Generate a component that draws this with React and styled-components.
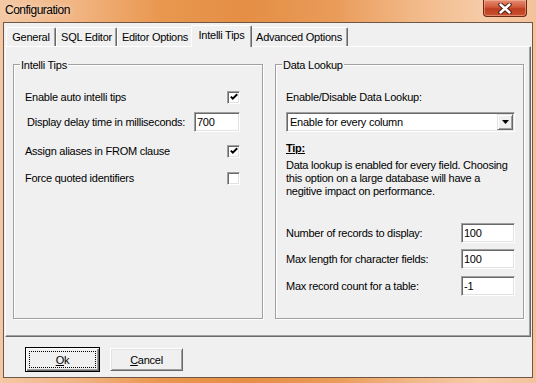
import React from "react";
import styled, { createGlobalStyle } from "styled-components";

const GlobalStyle = createGlobalStyle`
  *, *::before, *::after {
    box-sizing: border-box;
  }
  html, body {
    margin: 0;
    padding: 0;
    background: #f0f0f0;
  }
  body {
    font-family: "Liberation Sans", Arial, sans-serif;
    font-size: 11px;
    letter-spacing: -0.25px;
    color: #000;
  }
`;

const Window = styled.div`
  width: 536px;
  height: 383px;
  display: flex;
  flex-direction: column;
  overflow: hidden;
  background: linear-gradient(
    90deg,
    #f4c8a4 0%,
    #f1b583 14%,
    #e9974f 30%,
    #e58e45 46%,
    #e99b58 62%,
    #f2ba8a 78%,
    #f6cba7 90%,
    #f3c29b 100%
  );
`;

const TitleBar = styled.div`
  height: 22px;
  flex: none;
  display: flex;
  align-items: flex-start;
  justify-content: space-between;
  padding-left: 5px;
`;

const Title = styled.span`
  margin-top: 3px;
  font-size: 12px;
  letter-spacing: -0.5px;
  color: #000;
  text-shadow: 0 0 6px rgba(255, 240, 225, 0.9);
`;

const CloseButton = styled.div`
  width: 44px;
  height: 17px;
  margin-right: 9px;
  border: 1px solid #6e2814;
  border-top: none;
  border-radius: 0 0 4px 4px;
  background: linear-gradient(#e58d72 0%, #d2583a 45%, #bd3d20 55%, #c9522f 100%);
  box-shadow: inset 0 0 0 1px rgba(255, 200, 180, 0.45);
  display: flex;
  align-items: center;
  justify-content: center;
`;

const Client = styled.div`
  flex: 1;
  margin: 0 3px 5px 3px;
  border: 1px solid #6e5845;
  background: #f0f0f0;
  display: flex;
  flex-direction: column;
  padding: 1px 0 0 1px;
`;

const TabControl = styled.div`
  width: 526px;
  display: flex;
  flex-direction: column;
`;

const TabStrip = styled.div`
  height: 22px;
  display: flex;
  align-items: flex-end;
  padding-left: 1px;
`;

const Tab = styled.div`
  position: relative;
  width: ${p => p.$w}px;
  height: ${p => (p.$active ? 22 : 19)}px;
  margin: ${p => (p.$active ? "0 -2px -1px -2px" : "0")};
  z-index: ${p => (p.$active ? 1 : 0)};
  border-top: 1px solid #fff;
  border-left: 1px solid #fff;
  border-right: 1px solid #696969;
  border-radius: 2px 2px 0 0;
  box-shadow: inset -1px 0 0 #a0a0a0;
  background: #f0f0f0;
  text-align: center;
  line-height: 18px;
  white-space: nowrap;
`;

const Panel = styled.div`
  height: 291px;
  border-top: 1px solid #fff;
  border-left: 1px solid #fff;
  border-right: 1px solid #696969;
  border-bottom: 1px solid #696969;
  box-shadow: inset -1px -1px 0 #a0a0a0;
  padding: 17px 0 0 7px;
  display: grid;
  grid-template-columns: 250px 249px;
  column-gap: 12px;
  align-items: start;
`;

const GroupBox = styled.div`
  position: relative;
  height: 255px;
  border: 1px solid #a0a0a0;
  box-shadow: inset 1px 1px 0 #fff, 1px 1px 0 #fff;
  display: flex;
  flex-direction: column;
  padding: ${p => p.$pad};
`;

const Caption = styled.span`
  position: absolute;
  top: -6px;
  left: 6px;
  padding: 0 1px;
  line-height: 13px;
  background: #f0f0f0;
`;

const Row = styled.div`
  display: flex;
  align-items: center;
  justify-content: space-between;
  height: 20px;
  margin-top: ${p => p.$mt || 0}px;
  padding-left: ${p => p.$indent || 0}px;
  white-space: nowrap;
`;

const Label = styled.span`
  white-space: nowrap;
`;

const CheckBox = styled.div`
  width: 13px;
  height: 13px;
  border: 1px solid;
  border-color: #a0a0a0 #fff #fff #a0a0a0;
  box-shadow: inset 1px 1px 0 #696969, inset -1px -1px 0 #e3e3e3;
  background: #fff;
  display: flex;
  align-items: center;
  justify-content: center;
`;

const TextBox = styled.input`
  width: ${p => p.$w}px;
  height: 20px;
  margin: 0;
  padding: 0 0 0 2px;
  border: 1px solid;
  border-color: #a0a0a0 #fff #fff #a0a0a0;
  box-shadow: inset 1px 1px 0 #696969, inset -1px -1px 0 #e3e3e3;
  background: #fff;
  font-family: "Liberation Sans", Arial, sans-serif;
  font-size: 11px;
  letter-spacing: -0.25px;
  color: #000;
  outline: none;
`;

const ComboBox = styled.div`
  height: 20px;
  margin-top: 5px;
  border: 1px solid;
  border-color: #a0a0a0 #fff #fff #a0a0a0;
  box-shadow: inset 1px 1px 0 #696969, inset -1px -1px 0 #e3e3e3;
  background: #fff;
  display: flex;
  align-items: center;
  justify-content: space-between;
  padding: 0 1px 0 3px;
`;

const DropButton = styled.div`
  width: 16px;
  height: 16px;
  background: #f0f0f0;
  border: 1px solid;
  border-color: #e3e3e3 #696969 #696969 #e3e3e3;
  box-shadow: inset 1px 1px 0 #fff, inset -1px -1px 0 #a0a0a0;
  display: flex;
  align-items: center;
  justify-content: center;
`;

const TipTitle = styled.div`
  margin-top: 10px;
  line-height: 13px;
  font-weight: bold;
  text-decoration: underline;
`;

const TipText = styled.p`
  margin: 4px 0 0 0;
  line-height: 13px;
  white-space: nowrap;
`;

const ButtonRow = styled.div`
  display: flex;
  align-items: center;
  gap: 10px;
  padding: 10px 0 0 20px;
`;

const Button = styled.div`
  position: relative;
  width: ${p => (p.$default ? 75 : 73)}px;
  height: ${p => (p.$default ? 25 : 23)}px;
  background: #f0f0f0;
  border: 1px solid;
  border-color: ${p => (p.$default ? "#000" : "#fff #696969 #696969 #fff")};
  box-shadow: ${p =>
    p.$default
      ? "inset 1px 1px 0 #fff, inset -1px -1px 0 #696969, inset -2px -2px 0 #a0a0a0"
      : "inset 1px 1px 0 #e3e3e3, inset -1px -1px 0 #a0a0a0"};
  display: flex;
  align-items: center;
  justify-content: center;
  font-size: 11px;

  &::after {
    content: "";
    display: ${p => (p.$default ? "block" : "none")};
    position: absolute;
    inset: 3px;
    border: 1px dotted #000;
  }
`;

const Check = () => (
  <svg width="8" height="8" viewBox="0 0 8 8">
    <polyline points="0.8,3.6 2.8,5.6 7.2,1.2" fill="none" stroke="#000" strokeWidth="2" />
  </svg>
);

const CloseGlyph = () => (
  <svg width="14" height="11" viewBox="0 0 14 11">
    <path d="M2.5 1.5 L11.5 9.5 M11.5 1.5 L2.5 9.5" stroke="#4a1f14" strokeWidth="4.4" strokeLinecap="round" />
    <path d="M2.5 1.5 L11.5 9.5 M11.5 1.5 L2.5 9.5" stroke="#fff" strokeWidth="2.4" strokeLinecap="round" />
  </svg>
);

const Arrow = () => (
  <svg width="7" height="4" viewBox="0 0 7 4">
    <polygon points="0,0 7,0 3.5,4" fill="#000" />
  </svg>
);

const tabs = [
  { name: "General", w: 50 },
  { name: "SQL Editor", w: 61 },
  { name: "Editor Options", w: 76 },
  { name: "Intelli Tips", w: 61, active: true },
  { name: "Advanced Options", w: 98 },
];

const App = () => {
  return (
    <Window>
      <GlobalStyle />
      <TitleBar>
        <Title>Configuration</Title>
        <CloseButton>
          <CloseGlyph />
        </CloseButton>
      </TitleBar>
      <Client>
        <TabControl>
          <TabStrip>
            {tabs.map(t => (
              <Tab key={t.name} $w={t.w} $active={t.active}>
                {t.name}
              </Tab>
            ))}
          </TabStrip>
          <Panel>
            <GroupBox $pad="22px 22px 0 11px">
              <Caption>Intelli Tips</Caption>
              <Row>
                <Label>Enable auto intelli tips</Label>
                <CheckBox>
                  <Check />
                </CheckBox>
              </Row>
              <Row $mt={5} $indent={2}>
                <Label>Display delay time in milliseconds:</Label>
                <TextBox $w={46} defaultValue="700" readOnly />
              </Row>
              <Row $mt={9}>
                <Label>Assign aliases in FROM clause</Label>
                <CheckBox>
                  <Check />
                </CheckBox>
              </Row>
              <Row $mt={7}>
                <Label>Force quoted identifiers</Label>
                <CheckBox />
              </Row>
            </GroupBox>
            <GroupBox $pad="22px 8px 0 10px">
              <Caption>Data Lookup</Caption>
              <Row>
                <Label>Enable/Disable Data Lookup:</Label>
              </Row>
              <ComboBox>
                <span>Enable for every column</span>
                <DropButton>
                  <Arrow />
                </DropButton>
              </ComboBox>
              <TipTitle>Tip:</TipTitle>
              <TipText>
                Data lookup is enabled for every field. Choosing
                <br />
                this option on a large database will have a
                <br />
                negitive impact on performance.
              </TipText>
              <Row $mt={25}>
                <Label>Number of records to display:</Label>
                <TextBox $w={54} defaultValue="100" readOnly />
              </Row>
              <Row $mt={6}>
                <Label>Max length for character fields:</Label>
                <TextBox $w={54} defaultValue="100" readOnly />
              </Row>
              <Row $mt={7}>
                <Label>Max record count for a table:</Label>
                <TextBox $w={54} defaultValue="-1" readOnly />
              </Row>
            </GroupBox>
          </Panel>
        </TabControl>
        <ButtonRow>
          <Button $default>
            <span>
              <u>O</u>k
            </span>
          </Button>
          <Button>
            <span>
              <u>C</u>ancel
            </span>
          </Button>
        </ButtonRow>
      </Client>
    </Window>
  );
};

export default App;
